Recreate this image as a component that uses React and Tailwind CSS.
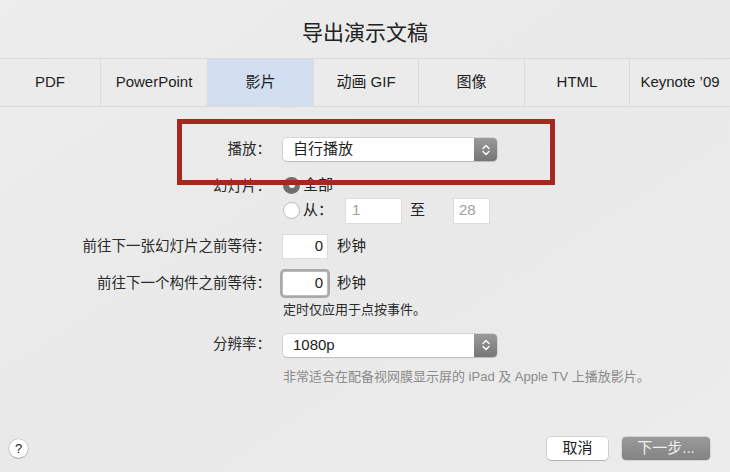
const tabs = ['PDF', 'PowerPoint', '影片', '动画 GIF', '图像', 'HTML', 'Keynote ’09']
const tabWidths = ['w-[100px]', 'w-[107px]', 'w-[106px]', 'w-[105px]', 'w-[106px]', 'w-[105px]', 'w-[101px]']

const font = "font-['Liberation_Sans','Noto_Sans_CJK_SC',sans-serif]"

function Stepper() {
  return (
    <div className="flex h-full w-[23px] items-center justify-center rounded-r-[4px] bg-gradient-to-b from-[#9a9a9a] to-[#777777]">
      <svg width="10" height="14" viewBox="0 0 10 14" fill="none">
        <path d="M2 5.5 L5 2.5 L8 5.5" stroke="white" strokeWidth="1.4" strokeLinecap="round" strokeLinejoin="round" />
        <path d="M2 8.5 L5 11.5 L8 8.5" stroke="white" strokeWidth="1.4" strokeLinecap="round" strokeLinejoin="round" />
      </svg>
    </div>
  )
}

function Select({ value }) {
  return (
    <div className="flex h-[23px] w-[214px] items-stretch rounded-[4px] bg-white shadow-[0_0_0_0.5px_rgba(0,0,0,0.18),0_1px_1px_rgba(0,0,0,0.12)]">
      <div className="flex flex-1 items-center pl-[10px] text-[15px] text-[#222]">{value}</div>
      <Stepper />
    </div>
  )
}

function Label({ children }) {
  return <div className="w-[271px] shrink-0 text-right text-[14.5px] text-[#2a2a2a]">{children}</div>
}

function App() {
  return (
    <main className={`relative flex h-[472px] w-[730px] flex-col overflow-hidden bg-gradient-to-br from-[#ededed] via-[#e9e9e9] to-[#ececec] ${font}`}>
      <div className="flex h-[58px] items-center justify-center pt-[8px] text-[21px] text-[#222]">导出演示文稿</div>

      <div className="flex h-[49px] border-y border-[#d8d8d8] bg-[#ebebeb]">
        {tabs.map((tab, i) => (
          <div
            key={tab}
            className={`flex ${tabWidths[i]} items-center justify-center text-[15px] text-[#1e1e1e] ${i > 0 ? 'border-l border-[#dcdcdc]' : ''} ${i === 2 ? 'bg-[#d1dff0]' : ''}`}
          >
            {tab}
          </div>
        ))}
      </div>

      <div className="flex flex-col pt-[31px]">
        <div className="flex items-center">
          <Label>播放：</Label>
          <div className="ml-[12px]">
            <Select value="自行播放" />
          </div>
        </div>

        <div className="mt-[14px] flex">
          <div className="pt-[1px]">
            <Label>幻灯片：</Label>
          </div>
          <div className="ml-[12px] flex flex-col">
            <div className="flex h-[20px] items-center">
              <div className="flex h-[17px] w-[17px] items-center justify-center rounded-full bg-[#6f6f6f]">
                <div className="h-[6px] w-[6px] rounded-full bg-white" />
              </div>
              <span className="ml-[3px] text-[15px] text-[#222]">全部</span>
            </div>
            <div className="mt-[3px] flex h-[25px] items-center">
              <div className="h-[17px] w-[17px] rounded-full border border-[#b9b9b9] bg-white" />
              <span className="ml-[3px] text-[15px] text-[#222]">从：</span>
              <div className="ml-[13px] flex h-[24px] w-[55px] items-center bg-white pl-[6px] text-[15px] text-[#a0a0a0] shadow-[0_0_0_1px_#dedede]">1</div>
              <span className="ml-[9px] text-[15px] text-[#222]">至</span>
              <div className="ml-[29px] flex h-[24px] w-[35px] items-center bg-white pl-[5px] text-[15px] text-[#a0a0a0] shadow-[0_0_0_1px_#dedede]">28</div>
            </div>
          </div>
        </div>

        <div className="mt-[12px] flex items-center">
          <Label>前往下一张幻灯片之前等待：</Label>
          <div className="ml-[12px] flex h-[23px] w-[44px] items-center justify-end bg-white pr-[4px] text-[15px] text-[#222] shadow-[0_0_0_1px_#dcdcdc]">0</div>
          <span className="ml-[10px] text-[14.5px] text-[#222]">秒钟</span>
        </div>

        <div className="mt-[14px] flex items-center">
          <Label>前往下一个构件之前等待：</Label>
          <div className="ml-[12px] flex h-[23px] w-[44px] items-center justify-end rounded-[2px] bg-white pr-[4px] text-[15px] text-[#222] shadow-[0_0_0_1px_#bcbcbc,0_0_0_3px_#a9a9a9]">0</div>
          <span className="ml-[10px] text-[14.5px] text-[#222]">秒钟</span>
        </div>

        <div className="ml-[283px] mt-[5px] text-[13px] text-[#2a2a2a]">定时仅应用于点按事件。</div>

        <div className="mt-[14px] flex items-center">
          <Label>分辨率：</Label>
          <div className="ml-[12px]">
            <Select value="1080p" />
          </div>
        </div>

        <div className="ml-[283px] mt-[10px] text-[13px] text-[#8a8a8a]">非常适合在配备视网膜显示屏的 iPad 及 Apple TV 上播放影片。</div>
      </div>

      <div className="mt-auto flex items-center justify-between pb-[12px] pl-[9px] pr-[20px]">
        <div className="flex h-[19px] w-[19px] items-center justify-center rounded-full bg-white text-[13px] text-[#222] shadow-[0_0_0_0.5px_rgba(0,0,0,0.25),0_1px_1px_rgba(0,0,0,0.15)]">?</div>
        <div className="flex items-center gap-[14px]">
          <div className="flex h-[23px] w-[61px] items-center justify-center rounded-[4px] bg-white text-[15px] text-[#222] shadow-[0_0_0_0.5px_rgba(0,0,0,0.2),0_1px_1px_rgba(0,0,0,0.15)]">取消</div>
          <div className="flex h-[23px] w-[88px] items-center justify-center rounded-[4px] bg-gradient-to-b from-[#9a9a9a] to-[#838383] text-[15px] text-[#f0f0f0] shadow-[0_0_0_0.5px_rgba(0,0,0,0.2)]">下一步...</div>
        </div>
      </div>

      <div className="pointer-events-none absolute left-[177px] top-[119px] h-[66px] w-[378px] border-[5px] border-[#a3281e]" />
    </main>
  )
}

export default App
